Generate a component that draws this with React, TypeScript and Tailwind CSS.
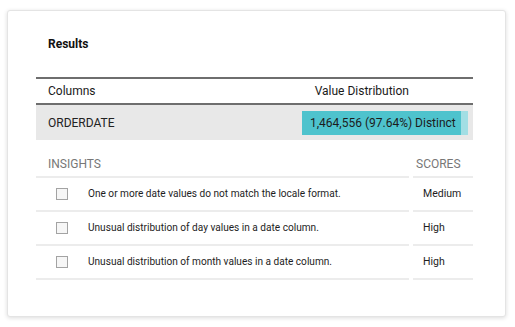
import React from "react"

type Insight = {
  text: string
  score: string
}

const INSIGHTS: Insight[] = [
  { text: "One or more date values do not match the locale format.", score: "Medium" },
  { text: "Unusual distribution of day values in a date column.", score: "High" },
  { text: "Unusual distribution of month values in a date column.", score: "High" },
]

function Checkbox() {
  return (
    <span className="block size-[12px] shrink-0 border border-[#a3a3a3] bg-[#f6f6f6]" />
  )
}

export default function App() {
  return (
    <div
      className="h-[327px] w-[515px] bg-white pl-[7px] pt-[10px]"
      style={{ fontFamily: "Roboto, 'Liberation Sans', sans-serif" }}
    >
      <div className="h-[307px] w-[499px] rounded-[3px] border border-[#e4e4e4] bg-white px-[28px] shadow-[0_1px_4px_rgba(0,0,0,0.14)]">
        <h2 className="pl-[12px] pt-[25px] text-[12px] leading-[16px] font-bold text-[#111]">
          Results
        </h2>

        <div className="mt-[25px] w-[437px]">
          {/* column header */}
          <div className="flex h-[28px] items-center justify-between border-y-2 border-[#6e6e6e] px-[12px] text-[12px] text-[#1a1a1a]">
            <span>Columns</span>
            <span className="mr-[52px]">Value Distribution</span>
          </div>

          {/* column row */}
          <div className="flex h-[35px] items-center justify-between bg-[#e8e8e8] pl-[12px] pr-[5px]">
            <span className="text-[12px] text-[#222]">ORDERDATE</span>
            <div className="flex h-[24px] w-[166px]">
              <div className="flex w-[159px] items-center bg-[#4ec3cd] pl-[8px] text-[12px] whitespace-nowrap text-[#1c1c1c]">
                1,464,556 (97.64%) Distinct
              </div>
              <div className="flex-1 bg-[#a2dee4]" />
            </div>
          </div>

          {/* insights */}
          <div className="grid grid-cols-[373px_60px] gap-x-[4px]">
            <div className="h-[38px] border-b-2 border-[#ececec] pl-[12px] pt-[16px] text-[12px] leading-[16px] text-[#777]">
              INSIGHTS
            </div>
            <div className="h-[38px] border-b-2 border-[#ececec] pl-[3px] pt-[16px] text-[12px] leading-[16px] text-[#777]">
              SCORES
            </div>
            {INSIGHTS.map((insight) => (
              <React.Fragment key={insight.text}>
                <div className="flex h-[34px] items-center gap-[20px] border-b-2 border-[#ececec] pl-[20px]">
                  <Checkbox />
                  <span className="text-[10.1px] text-[#1e1e1e]">{insight.text}</span>
                </div>
                <div className="flex h-[34px] items-center border-b-2 border-[#ececec] pl-[10px] text-[10.5px] text-[#1e1e1e]">
                  {insight.score}
                </div>
              </React.Fragment>
            ))}
          </div>
        </div>
      </div>
    </div>
  )
}
